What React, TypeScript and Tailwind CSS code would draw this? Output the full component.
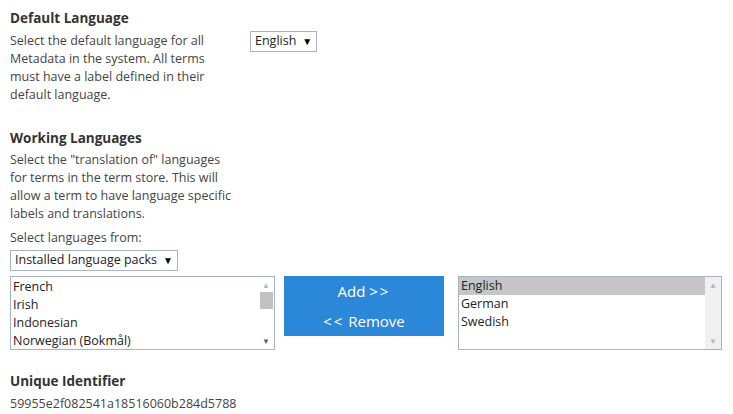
export default function App() {
  const left = ["French", "Irish", "Indonesian", "Norwegian (Bokmål)"];
  const right = ["English", "German", "Swedish"];
  return (
    <div className="h-[414px] w-[733px] bg-white pl-[10px] pt-[9px] font-['Open_Sans',sans-serif] text-[12.5px] text-[#444]">
      <div className="flex">
        <div className="w-[240px]">
          <h3 className="text-[13.5px] font-bold leading-[18px] text-[#333]">Default Language</h3>
          <p className="mt-[5px] w-[225px] leading-[18px]">
            Select the default language for all Metadata in the system. All terms must have a label defined in their default language.
          </p>
        </div>
        <div className="mt-[22px] flex h-[21px] items-center gap-[6px] self-start border border-[#a6b5c6] px-[4px] text-[#222]">
          <span>English</span>
          <span className="text-[10px] text-black">▼</span>
        </div>
      </div>

      <h3 className="mt-[25px] text-[13.5px] font-bold leading-[18px] text-[#333]">Working Languages</h3>
      <p className="mt-[4px] whitespace-nowrap leading-[18px]">
        Select the "translation of" languages
        <br />
        for terms in the term store. This will
        <br />
        allow a term to have language specific
        <br />
        labels and translations.
      </p>
      <p className="mt-[6px] leading-[18px]">Select languages from:</p>
      <div className="mt-[3px] flex h-[21px] w-[168px] items-center justify-between border border-[#a6b5c6] px-[4px] text-[#222]">
        <span>Installed language packs</span>
        <span className="text-[10px] text-black">▼</span>
      </div>

      <div className="mt-[5px] flex items-start">
        <div className="flex h-[74px] w-[265px] border border-[#a6b5c6] text-[#222]">
          <div className="flex-1 pl-[2px] pt-[1px]">
            {left.map((l) => (
              <div key={l} className="h-[18px] leading-[18px]">{l}</div>
            ))}
          </div>
          <div className="flex w-[16px] flex-col items-center bg-white">
            <span className="mt-[3px] text-[8px] leading-[10px] text-[#b8b8b8]">▲</span>
            <div className="mt-[2px] h-[17px] w-[13px] bg-[#c1c1c1]" />
            <div className="flex-1" />
            <span className="mb-[3px] text-[8px] leading-[10px] text-[#606060]">▼</span>
          </div>
        </div>
        <div className="ml-[9px] flex h-[60px] w-[160px] flex-col items-center bg-[#2b88d8] text-[15px] text-white">
          <div className="mt-[5px] leading-[20px]">
            Add <span className="tracking-[2px]">&gt;&gt;</span>
          </div>
          <div className="mt-[10px] leading-[20px]">
            <span className="tracking-[2px]">&lt;&lt;</span> Remove
          </div>
        </div>
        <div className="ml-[14px] flex h-[74px] w-[264px] border border-[#a6b5c6] text-[#222]">
          <div className="flex-1">
            {right.map((l, i) => (
              <div key={l} className={`h-[18px] pl-[2px] leading-[18px] ${i === 0 ? "bg-[#c6c6c6]" : ""}`}>{l}</div>
            ))}
          </div>
          <div className="flex w-[16px] flex-col items-center bg-[#f0f0f0]">
            <span className="mt-[3px] text-[8px] leading-[10px] text-[#b8b8b8]">▲</span>
            <div className="flex-1" />
            <span className="mb-[3px] text-[8px] leading-[10px] text-[#b8b8b8]">▼</span>
          </div>
        </div>
      </div>

      <h3 className="mt-[22px] text-[13.5px] font-bold leading-[18px] text-[#333]">Unique Identifier</h3>
      <p className="mt-[5px] leading-[18px]">59955e2f082541a18516060b284d5788</p>
    </div>
  );
}
